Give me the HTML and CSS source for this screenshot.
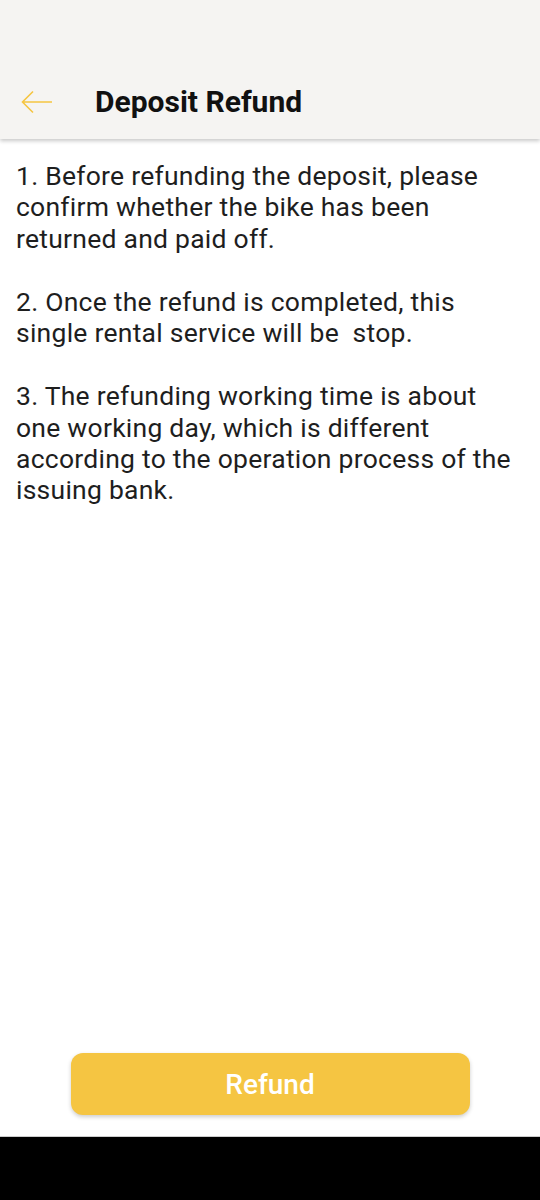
FILE: index.html
```html
<!DOCTYPE html>
<html>
<head>
<meta charset="utf-8">
<link rel="stylesheet" href="styles.css">
</head>
<body>
<div class="screen">
  <header class="header">
    <div class="bar">
      <span class="back">
        <svg width="32" height="24" viewBox="0 0 32 24"><path d="M31 12H2M12 1.5L1.5 12L12 22.5" fill="none" stroke="#f5c542" stroke-width="1.6"/></svg>
      </span>
      <h1 class="title">Deposit Refund</h1>
    </div>
  </header>
  <main class="content">
    <p>1. Before refunding the deposit, please confirm whether the bike has been returned and paid off.</p>
    <p>2. Once the refund is completed, this single rental service will be&nbsp; stop.</p>
    <p>3. The refunding working time is about one working day, which is different according to the operation process of the issuing bank.</p>
  </main>
  <div class="footer">
    <button class="btn">Refund</button>
  </div>
  <div class="navbar"></div>
</div>
</body>
</html>
```
FILE: styles.css
```css
* { box-sizing: border-box; }
html, body { margin: 0; padding: 0; }
body { font-family: Roboto, "Noto Sans", sans-serif; background: #fff; }
.screen { width: 540px; height: 1200px; display: flex; flex-direction: column; }
.header { height: 139px; background: #f5f4f2; padding-top: 64px; box-shadow: 0 2px 4px rgba(0,0,0,0.22); position: relative; z-index: 1; }
.bar { height: 75px; display: flex; align-items: center; }
.back { width: 95px; padding-left: 21px; display: flex; align-items: center; }
.back svg { display: block; }
.title { margin: 0; font-size: 30px; font-weight: 700; color: #111; }
.content { flex: 1; padding: 21px 16px 0 16px; color: #1e1e1e; font-size: 26.5px; letter-spacing: 0.25px; line-height: 31.4px; }
.content p { margin: 0 0 31.6px 0; }
.footer { display: flex; justify-content: center; padding-bottom: 21px; }
.btn { width: 399px; height: 62px; border: none; border-radius: 12px; background: #f5c542; color: #fff; font-family: Roboto, sans-serif; font-size: 28px; font-weight: 500; box-shadow: 0 2px 4px rgba(0,0,0,0.2); }
.navbar { height: 64px; background: #000; border-top: 1px solid #ccc; }
```
